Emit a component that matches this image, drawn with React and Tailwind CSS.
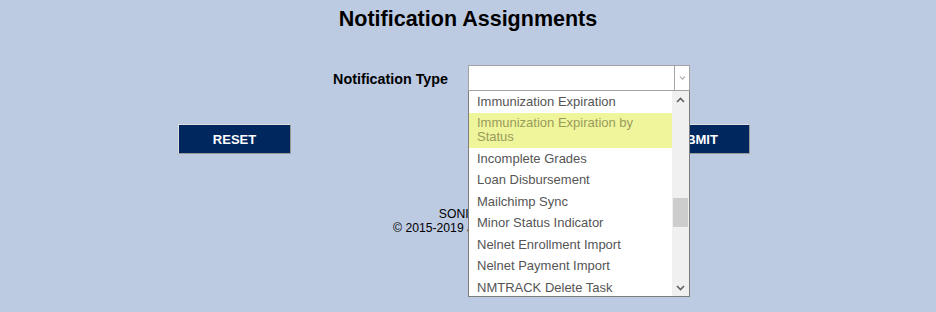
import React from "react";

const options = [
  "Immunization Expiration",
  "Immunization Expiration by Status",
  "Incomplete Grades",
  "Loan Disbursement",
  "Mailchimp Sync",
  "Minor Status Indicator",
  "Nelnet Enrollment Import",
  "Nelnet Payment Import",
  "NMTRACK Delete Task",
];

function Chevron({ up, className }) {
  return (
    <svg width="9" height="6" viewBox="0 0 9 6" className={className}>
      <path
        d={up ? "M1 5 L4.5 1.5 L8 5" : "M1 1 L4.5 4.5 L8 1"}
        fill="none"
        stroke="currentColor"
        strokeWidth="1.6"
      />
    </svg>
  );
}

export default function App() {
  return (
    <div className="min-h-[312px] w-full bg-[#bccae2] font-['Liberation_Sans',Arial,sans-serif] text-black">
      {/* title */}
      <div className="pt-[7px] text-center text-[21.5px] font-bold leading-[24px]">
        Notification Assignments
      </div>

      {/* form row */}
      <div className="mt-[34px] grid grid-cols-2">
        <div className="flex items-center justify-end pr-[20px] pt-[3px] text-[14.3px] font-bold">
          Notification Type
        </div>
        <div className="relative w-[222px]">
          <div className="flex h-[26px] border border-[#a3a3a3] bg-white">
            <div className="flex-1" />
            <div className="flex w-[15px] items-center justify-center border-l border-[#a3a3a3] text-[#b5b5b5]">
              <Chevron className="scale-75" />
            </div>
          </div>

          {/* open dropdown list */}
          <div className="absolute left-0 top-[26px] z-10 flex h-[206px] w-[222px] border border-t-0 border-[#7d7d7d] bg-white">
            <ul className="flex-1 overflow-hidden text-[13px] text-[#555]">
              {options.map((o, i) => (
                <li
                  key={o}
                  className={
                    i === 1
                      ? "bg-[#eef59b] py-[3.75px] pl-[8px] pr-[20px] leading-[14px] text-[#9a9b5b]"
                      : "py-[3.75px] pl-[8px] leading-[14px] whitespace-nowrap"
                  }
                >
                  {o}
                </li>
              ))}
            </ul>
            <div className="flex w-[17px] flex-col bg-[#f0f0f0]">
              <div className="flex h-[17px] items-center justify-center text-[#606060]">
                <Chevron up />
              </div>
              <div className="flex-1 pt-[90px]">
                <div className="mx-auto h-[29px] w-[15px] bg-[#cdcdcd]" />
              </div>
              <div className="flex h-[17px] items-center justify-center text-[#606060]">
                <Chevron />
              </div>
            </div>
          </div>
        </div>
      </div>

      {/* buttons */}
      <div className="mt-[33px] flex pl-[178px]">
        <button className="h-[30px] w-[113px] border border-b-[#999] border-l-[#e0e0e0] border-r-[#999] border-t-[#e0e0e0] bg-[#00285f] pt-[2px] text-[13px] font-bold text-white">
          RESET
        </button>
        <button className="ml-[345px] h-[30px] w-[114px] border border-b-[#999] border-l-[#e0e0e0] border-r-[#999] border-t-[#e0e0e0] bg-[#00285f] pt-[2px] text-[13px] font-bold text-white">
          SUBMIT
        </button>
      </div>

      {/* footer */}
      <div className="mt-[53px] text-center text-[12.2px] leading-[14px] text-black">
        <div>SONIS 4.8</div>
        <div>© 2015-2019 Jenzabar, Inc.</div>
      </div>
    </div>
  );
}
